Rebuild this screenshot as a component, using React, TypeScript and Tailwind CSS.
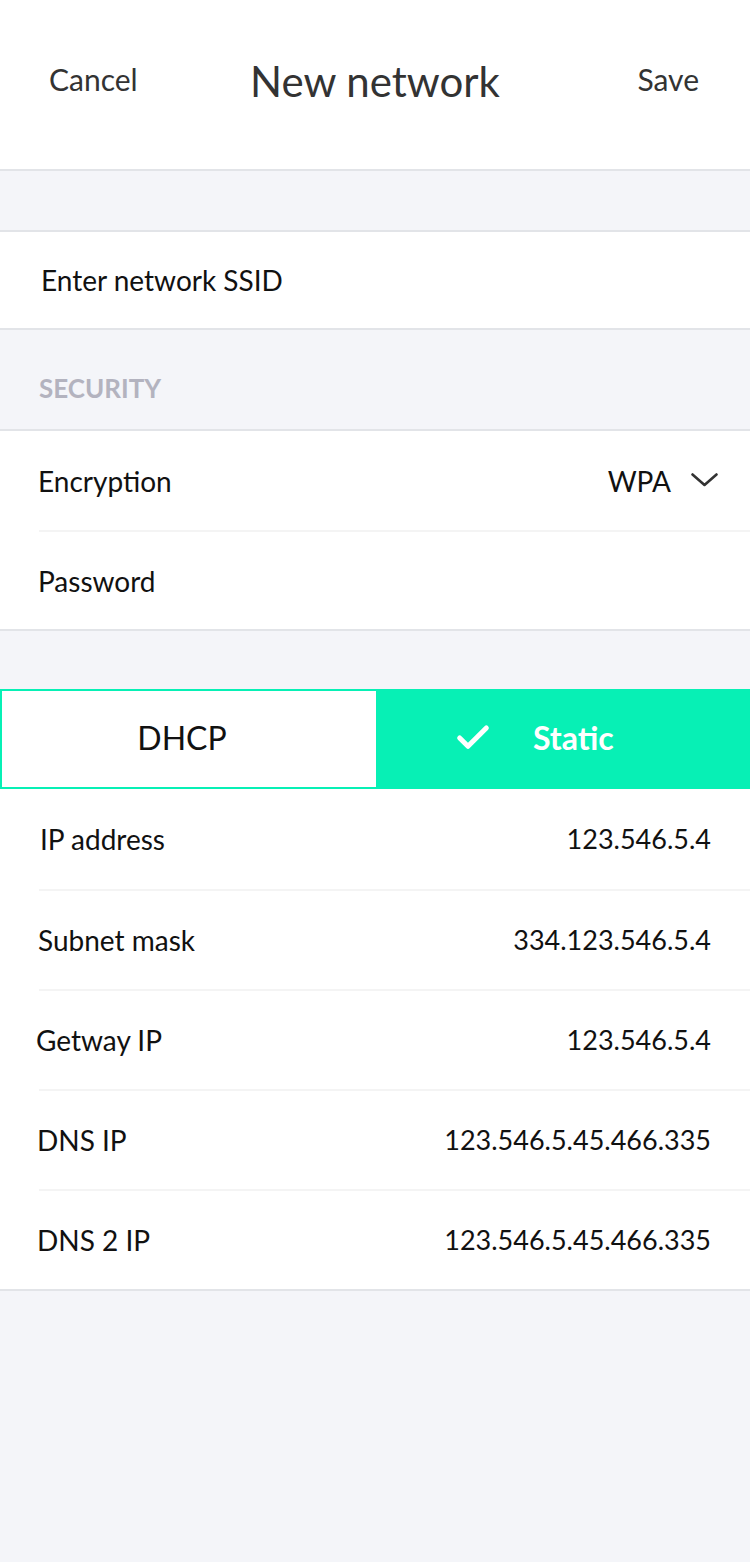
import { Check } from "lucide-react";

const rows = [
  { label: "IP address", value: "123.546.5.4", pl: "pl-[40px]" },
  { label: "Subnet mask", value: "334.123.546.5.4", pl: "pl-[38px]" },
  { label: "Getway IP", value: "123.546.5.4", pl: "pl-[36px]" },
  { label: "DNS IP", value: "123.546.5.45.466.335", pl: "pl-[37px]" },
  { label: "DNS 2 IP", value: "123.546.5.45.466.335", pl: "pl-[37px]" },
];

export default function App() {
  return (
    <div
      className="min-h-[1562px] w-[750px] bg-[#f4f5f9] text-[#111]"
      style={{ fontFamily: "Lato, 'Open Sans', sans-serif" }}
    >
      {/* Header */}
      <div className="relative flex h-[171px] items-center justify-between border-b-2 border-[#e2e4e8] bg-white pb-[10px] pl-[49px] pr-[51px]">
        <button className="text-[30px] text-[#333]">Cancel</button>
        <h1 className="absolute left-0 right-0 top-[50px] text-center text-[42px] text-[#333]">
          New network
        </h1>
        <button className="text-[30px] text-[#333]">Save</button>
      </div>

      <div className="h-[61px] border-b-2 border-[#e2e4e8]" />

      {/* SSID */}
      <div className="flex h-[98px] items-center border-b-2 border-[#e2e4e8] bg-white px-[41px]">
        <span className="text-[28px]">Enter network SSID</span>
      </div>

      {/* Security */}
      <div className="flex h-[101px] items-center border-b-2 border-[#e2e4e8] px-[39px] pt-[18px]">
        <span className="text-[26px] font-bold text-[#b3b3bf]">SECURITY</span>
      </div>

      <div className="bg-white">
        <div className="flex h-[99px] items-center justify-between pl-[38px] pr-[32px]">
          <span className="text-[28px]">Encryption</span>
          <div className="flex items-center gap-[20px]">
            <span className="text-[28px]">WPA</span>
            <svg width="27" height="14" viewBox="0 0 27 14" fill="none" className="mt-[-2px]">
              <path d="M1.5 1.5 L13.5 12 L25.5 1.5" stroke="#333" strokeWidth="2.6" strokeLinecap="round" strokeLinejoin="round" />
            </svg>
          </div>
        </div>
        <div className="ml-[39px] h-[2px] bg-[#f4f4f4]" />
        <div className="flex h-[99px] items-center border-b-2 border-[#e2e4e8] px-[38px]">
          <span className="text-[28px]">Password</span>
        </div>
      </div>

      <div className="h-[58px]" />

      {/* Toggle */}
      <div className="flex h-[100px] border-2 border-[#07f0b5] bg-[#07f0b5]">
        <button className="flex w-[374px] items-center justify-center bg-white pb-[2px] pr-[14px] text-[32px]">
          DHCP
        </button>
        <button className="flex flex-1 items-center gap-[40px] pb-[2px] pl-[77px] text-[32px] font-bold text-white">
          <Check className="h-[40px] w-[40px]" strokeWidth={3} />
          Static
        </button>
      </div>

      {/* Static fields */}
      <div className="border-b-2 border-[#e2e4e8] bg-white">
        {rows.map((r, i) => (
          <div key={r.label}>
            {i > 0 && <div className="ml-[39px] h-[2px] bg-[#f4f4f4]" />}
            <div
              className={`flex ${i === 0 ? "h-[100px]" : "h-[98px]"} items-center justify-between ${r.pl} pr-[39px]`}
            >
              <span className="text-[28px]">{r.label}</span>
              <span className="text-[27px]">{r.value}</span>
            </div>
          </div>
        ))}
      </div>
    </div>
  );
}
